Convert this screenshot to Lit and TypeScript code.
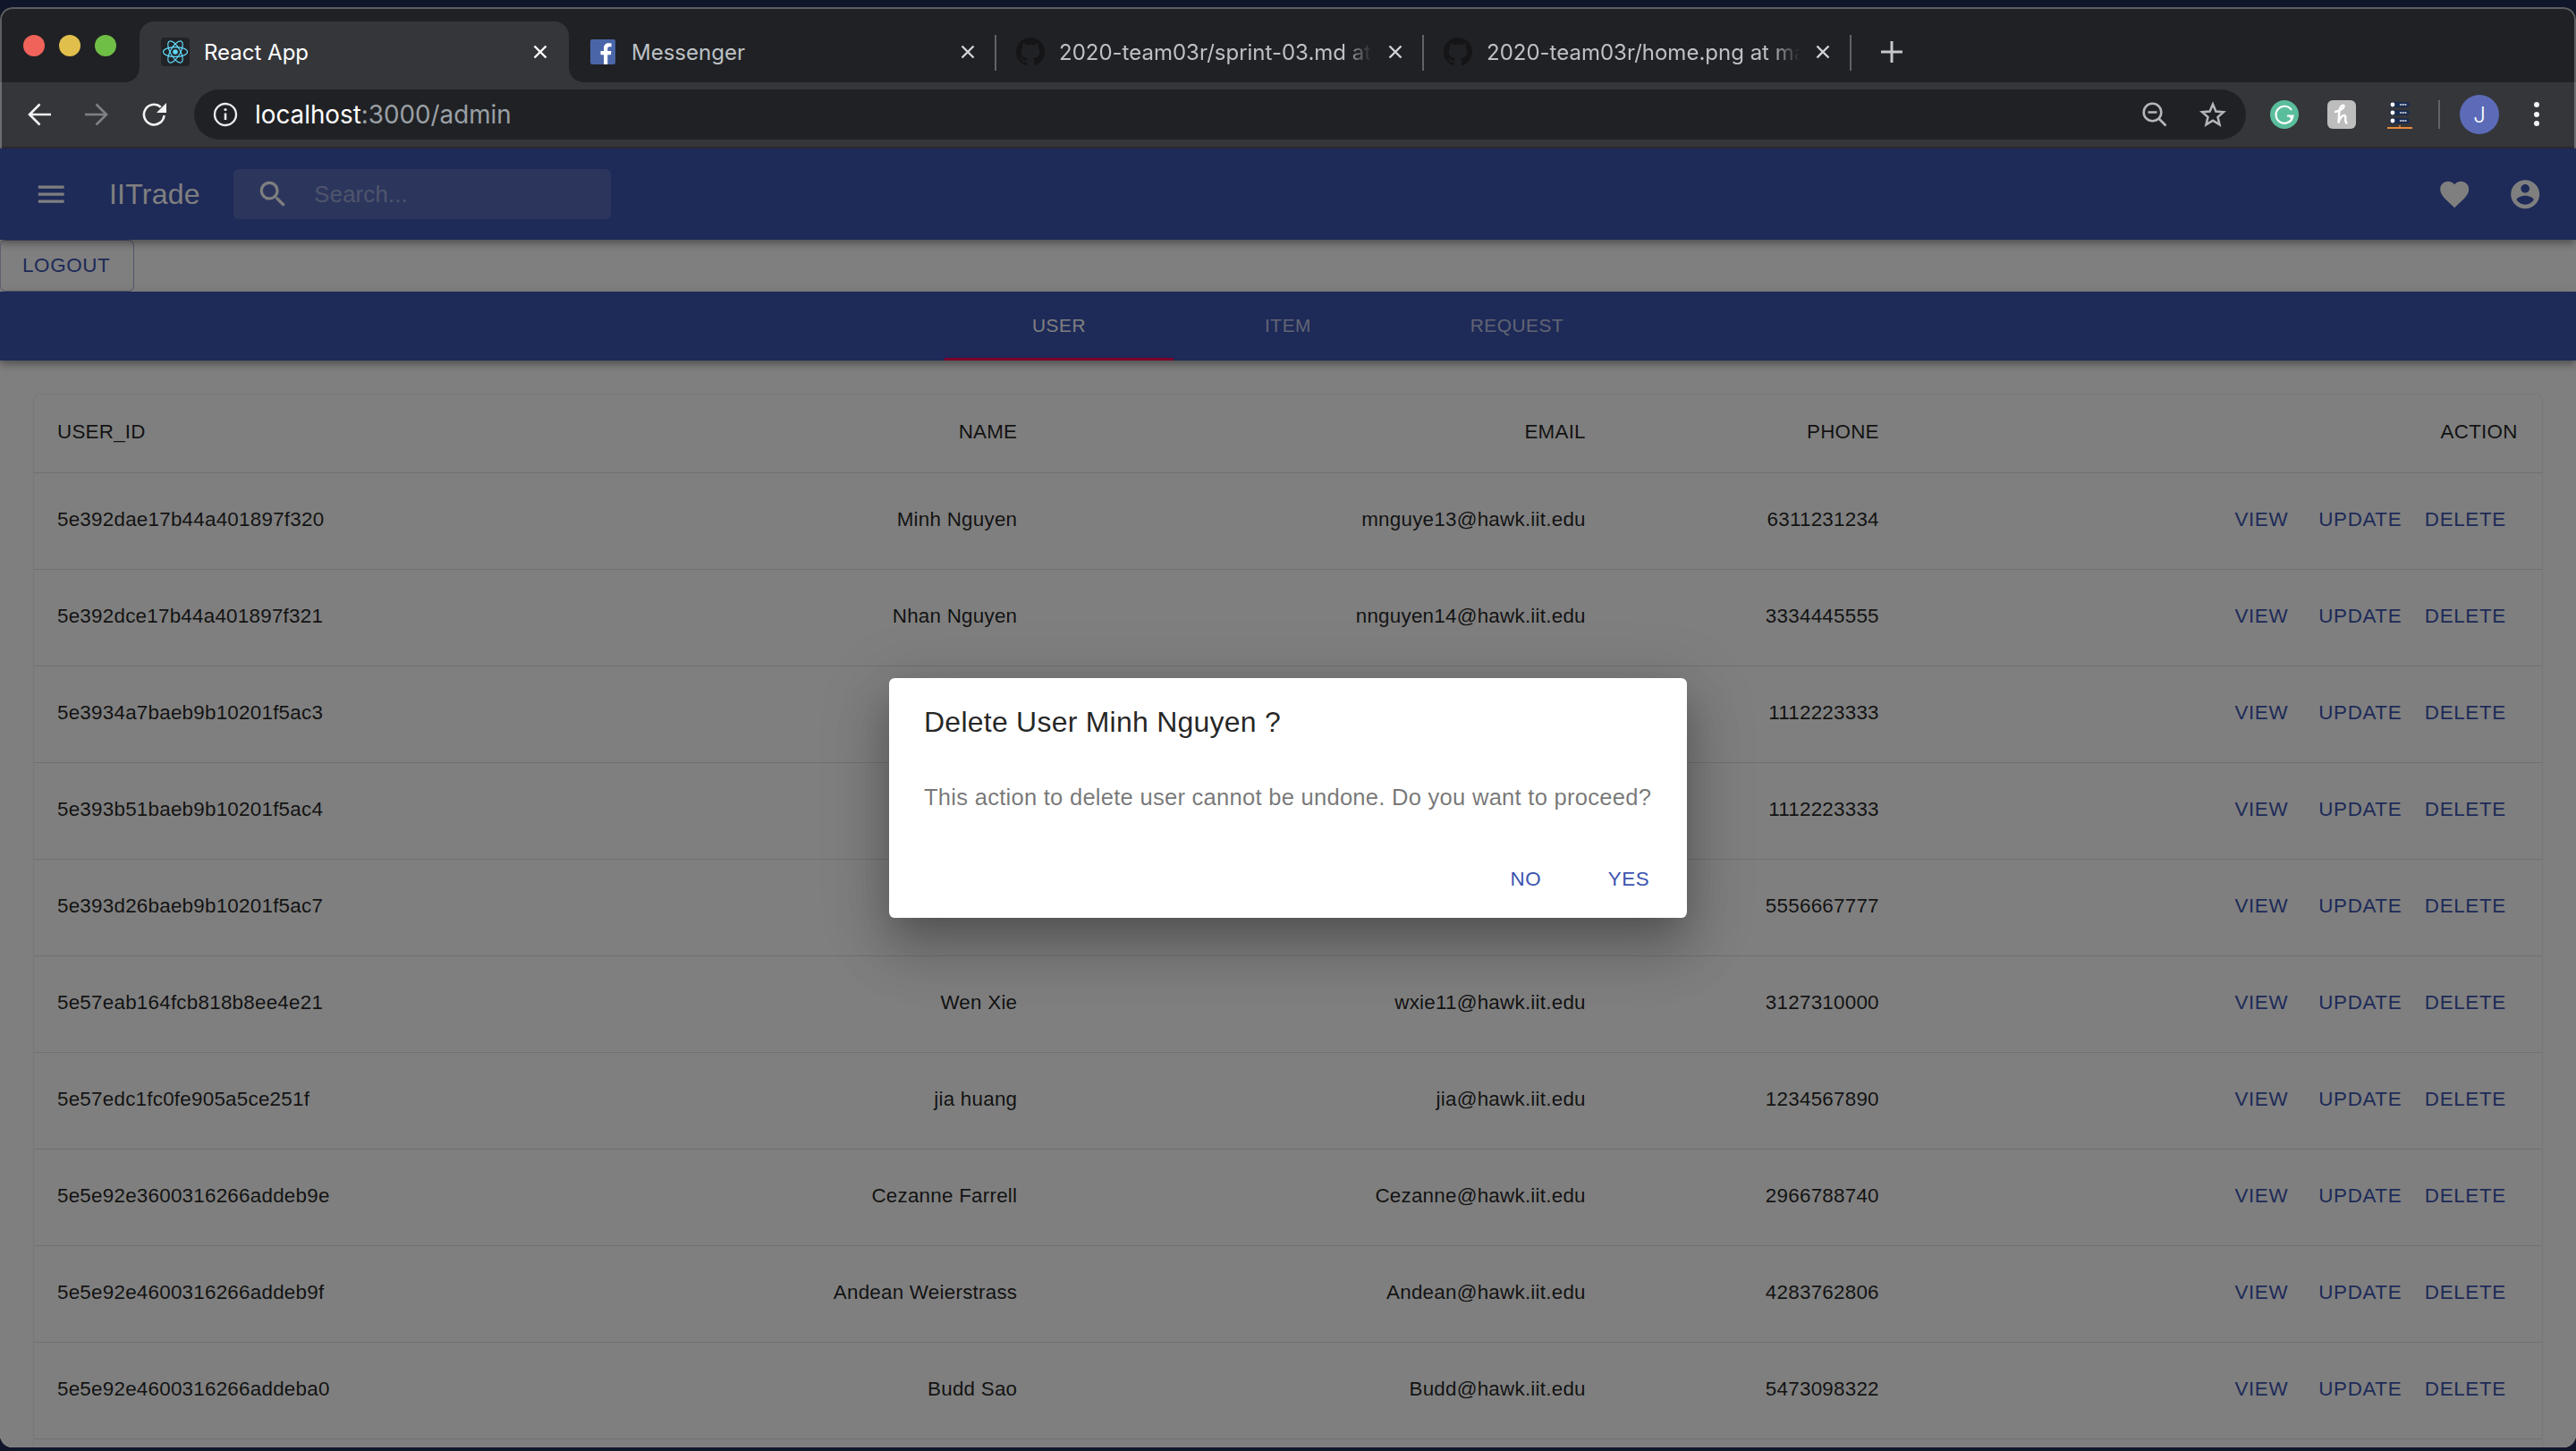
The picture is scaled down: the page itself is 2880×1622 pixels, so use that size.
import { LitElement, css, html, svg } from "lit";
import { customElement } from "lit/decorators.js";

const users = [
  ["5e392dae17b44a401897f320", "Minh Nguyen", "mnguye13@hawk.iit.edu", "6311231234"],
  ["5e392dce17b44a401897f321", "Nhan Nguyen", "nnguyen14@hawk.iit.edu", "3334445555"],
  ["5e3934a7baeb9b10201f5ac3", "", "", "1112223333"],
  ["5e393b51baeb9b10201f5ac4", "", "", "1112223333"],
  ["5e393d26baeb9b10201f5ac7", "", "", "5556667777"],
  ["5e57eab164fcb818b8ee4e21", "Wen Xie", "wxie11@hawk.iit.edu", "3127310000"],
  ["5e57edc1fc0fe905a5ce251f", "jia huang", "jia@hawk.iit.edu", "1234567890"],
  ["5e5e92e3600316266addeb9e", "Cezanne Farrell", "Cezanne@hawk.iit.edu", "2966788740"],
  ["5e5e92e4600316266addeb9f", "Andean Weierstrass", "Andean@hawk.iit.edu", "4283762806"],
  ["5e5e92e4600316266addeba0", "Budd Sao", "Budd@hawk.iit.edu", "5473098322"],
  ["", "", "", ""],
];

const GITHUB =
  "M8 0C3.58 0 0 3.58 0 8c0 3.54 2.29 6.53 5.47 7.59.4.07.55-.17.55-.38 0-.19-.01-.82-.01-1.49-2.01.37-2.53-.49-2.69-.94-.09-.23-.48-.94-.82-1.13-.28-.15-.68-.52-.01-.53.63-.01 1.08.58 1.23.82.72 1.21 1.87.87 2.33.66.07-.52.28-.87.51-1.07-1.78-.2-3.64-.89-3.64-3.95 0-.87.31-1.59.82-2.15-.08-.2-.36-1.02.08-2.12 0 0 .67-.21 2.2.82.64-.18 1.32-.27 2-.27.68 0 1.36.09 2 .27 1.53-1.04 2.2-.82 2.2-.82.44 1.1.16 1.92.08 2.12.51.56.82 1.27.82 2.15 0 3.07-1.87 3.75-3.65 3.95.29.25.54.73.54 1.48 0 1.07-.01 1.93-.01 2.2 0 .21.15.46.55.38A8.013 8.013 0 0016 8c0-4.42-3.58-8-8-8z";

const reactIcon = html`<div class="fav react">
  <svg width="32" height="32" viewBox="0 0 32 32" fill="none" stroke="#61dafb" stroke-width="1.2">
    <circle cx="16" cy="16" r="2.8" fill="#61dafb" stroke="none"></circle>
    <ellipse cx="16" cy="16" rx="13.5" ry="5.4"></ellipse>
    <ellipse cx="16" cy="16" rx="13.5" ry="5.4" transform="rotate(60 16 16)"></ellipse>
    <ellipse cx="16" cy="16" rx="13.5" ry="5.4" transform="rotate(120 16 16)"></ellipse>
  </svg>
</div>`;

const fbIcon = html`<div class="fav">
  <svg width="28" height="28" viewBox="0 0 28 28">
    <rect width="28" height="28" rx="2" fill="#4a66a8"></rect>
    <path fill="#fff" d="M19.3 28V17.2h3.6l.5-4.2h-4.1v-2.700c0-1.200.3-2 2.100-2h2.200V4.500c-.4-.1-1.700-.2-3.200-.2-3.200 0-5.300 1.900-5.300 5.500V13h-3.600v4.200h3.600V28z"></path>
  </svg>
</div>`;

const ghIcon = html`<div class="fav">
  <svg width="32" height="32" viewBox="0 0 16 16"><path fill="#151517" d=${GITHUB}></path></svg>
</div>`;

const closeIcon = html`<svg class="close" width="20" height="20" viewBox="0 0 20 20" fill="none" stroke="currentColor" stroke-width="2.4">
  <path d="M3.500 3.500l13 13M16.500 3.500l-13 13"></path>
</svg>`;

const mui = (d: string) => svg`<path d=${d}></path>`;

@customElement("app-root")
export class AppRoot extends LitElement {
  static styles = css`
    :host {
      display: block;
      height: 1622px;
      overflow: hidden;
      background: #10172a;
      font-family: "Liberation Sans", Arial, sans-serif;
    }
    .window {
      position: relative;
      margin-top: 8px;
      height: 1610px;
      display: flex;
      flex-direction: column;
      border-radius: 14px;
      overflow: hidden;
      background: #202124;
    }
    .window::after {
      content: "";
      position: absolute;
      inset: 0;
      border-radius: 14px;
      border: 2px solid rgba(255, 255, 255, 0.28);
      pointer-events: none;
    }

    /* browser chrome */
    .strip {
      height: 84px;
      flex: none;
      display: flex;
      padding-top: 16px;
      box-sizing: border-box;
      background: #202124;
      position: relative;
    }
    .lights {
      width: 156px;
      height: 54px;
      flex: none;
      display: flex;
      align-items: center;
      gap: 16px;
      padding: 0 0 0 26px;
      box-sizing: border-box;
    }
    .lights i {
      width: 24px;
      height: 24px;
      border-radius: 50%;
    }
    .tab {
      width: 478px;
      height: 68px;
      flex: none;
      display: flex;
      align-items: center;
      gap: 16px;
      padding: 0 22px;
      box-sizing: border-box;
      color: #bdc1c6;
      font: 24px "Inter", sans-serif;
      position: relative;
    }
    .tab.active {
      width: 480px;
      padding-left: 24px;
      background: #35363a;
      color: #fff;
      border-radius: 16px 16px 0 0;
    }
    .tab.active::before,
    .tab.active::after {
      content: "";
      position: absolute;
      bottom: 0;
      width: 16px;
      height: 16px;
    }
    .tab.active::before {
      left: -16px;
      background: radial-gradient(circle at 0 0, transparent 15.500px, #35363a 16px);
    }
    .tab.active::after {
      right: -16px;
      background: radial-gradient(circle at 100% 0, transparent 15.500px, #35363a 16px);
    }
    .tab.sep::after {
      content: "";
      position: absolute;
      right: 0;
      top: 15px;
      height: 40px;
      width: 2px;
      background: #5f6368;
    }
    .fav {
      width: 32px;
      height: 32px;
      flex: none;
      display: flex;
      align-items: center;
      justify-content: center;
    }
    .fav.react {
      background: #222326;
      border-radius: 4px;
    }
    .title {
      flex: 1;
      min-width: 0;
      white-space: nowrap;
      overflow: hidden;
      -webkit-mask-image: linear-gradient(to right, #000 calc(100% - 32px), transparent);
      mask-image: linear-gradient(to right, #000 calc(100% - 32px), transparent);
    }
    .tab.active .title,
    .tab.plain .title {
      -webkit-mask-image: none;
      mask-image: none;
    }
    .close {
      flex: none;
      color: #d0d2d6;
    }
    .tab.active .close {
      color: #fff;
    }
    .plus {
      margin: 21px 0 0 32px;
      flex: none;
    }

    .toolbar {
      height: 72px;
      flex: none;
      display: flex;
      align-items: center;
      padding-left: 31px;
      background: #35363a;
      border-bottom: 2px solid #28292c;
      box-sizing: content-box;
    }
    .toolbar > svg {
      flex: none;
    }
    .omni {
      width: 2294px;
      height: 56px;
      margin-left: 30px;
      flex: none;
      display: flex;
      align-items: center;
      padding: 0 22px 0 21px;
      box-sizing: border-box;
      border-radius: 28px;
      background: #202124;
    }
    .url {
      flex: 1;
      margin-left: 19px;
      font: 27.800px "Inter", sans-serif;
      color: #9aa0a6;
    }
    .url b {
      font-weight: 400;
      color: #fff;
    }
    .star {
      margin-left: 36px;
    }
    .ext-gram {
      margin-left: 27px;
    }
    .ext-honey {
      margin-left: 32px;
    }
    .ext-list {
      margin-left: 35px;
    }
    .divider {
      width: 2px;
      height: 32px;
      margin-left: 29px;
      flex: none;
      background: #5f6368;
    }
    .avatar {
      width: 44px;
      height: 44px;
      margin-left: 22px;
      flex: none;
      display: flex;
      align-items: center;
      justify-content: center;
      border-radius: 50%;
      background: #5c6bb8;
      color: #fff;
      font: 300 24px "Inter", sans-serif;
    }
    .dots {
      margin-left: 39px;
    }

    /* the app */
    .viewport {
      position: relative;
      flex: 1;
      min-height: 0;
      overflow: hidden;
      background: #fff;
    }
    .appbar {
      height: 102.400px;
      display: flex;
      align-items: center;
      background: #3c54b0;
      color: #fff;
      position: relative;
      z-index: 2;
      box-shadow: 0 3.200px 6.400px -1.600px rgba(0, 0, 0, 0.2), 0 6.400px 8px 0 rgba(0, 0, 0, 0.14),
        0 1.600px 16px 0 rgba(0, 0, 0, 0.12);
    }
    .appbar svg {
      fill: #fff;
      flex: none;
    }
    .menu {
      margin-left: 38px;
    }
    .logo {
      margin-left: 45.600px;
      font-size: 32px;
      letter-spacing: 0.240px;
    }
    .search {
      width: 422px;
      height: 56px;
      margin-left: 37.500px;
      display: flex;
      align-items: center;
      padding-left: 25px;
      box-sizing: border-box;
      border-radius: 6.400px;
      background: rgba(255, 255, 255, 0.15);
    }
    .placeholder {
      margin-left: 26.600px;
      font-size: 25.600px;
      color: rgba(255, 255, 255, 0.42);
      letter-spacing: 0.240px;
    }
    .grow {
      flex: 1;
    }
    .gap {
      margin-left: 40px;
    }
    .acct {
      margin-right: 38px;
    }

    .logout-row {
      height: 57.600px;
    }
    .logout {
      width: 150px;
      height: 57.600px;
      padding-left: 24px;
      box-sizing: border-box;
      display: flex;
      align-items: center;
      font-size: 22.400px;
      letter-spacing: 0.640px;
      color: #3c54b0;
      border: 1.600px solid rgba(63, 81, 181, 0.5);
      border-radius: 6.400px;
    }

    .tabs {
      height: 76.800px;
      display: flex;
      justify-content: center;
      background: #3c54b0;
      position: relative;
      z-index: 1;
      box-shadow: 0 3.200px 6.400px -1.600px rgba(0, 0, 0, 0.2), 0 6.400px 8px 0 rgba(0, 0, 0, 0.14),
        0 1.600px 16px 0 rgba(0, 0, 0, 0.12);
    }
    .tabs div {
      width: 256px;
      box-sizing: border-box;
      display: flex;
      align-items: center;
      justify-content: center;
      padding-top: 3.200px;
      font-size: 20.800px;
      letter-spacing: 0.594px;
      color: rgba(255, 255, 255, 0.7);
      border-bottom: 3.200px solid transparent;
    }
    .tabs div.on {
      color: #fff;
      border-bottom-color: #f50057;
    }

    .card {
      margin: 38px 38.400px 0;
      background: #fff;
      border-radius: 6.400px;
      box-shadow: 0 1.600px 1.600px rgba(0, 0, 0, 0.14), 0 0 1.600px rgba(0, 0, 0, 0.2);
    }
    .row {
      display: grid;
      grid-template-columns: 562px 562.500px 635.500px 328px 1fr;
      height: 108px;
      padding-bottom: 1.600px;
      box-sizing: border-box;
      align-items: center;
      font-size: 22.400px;
      letter-spacing: 0.240px;
      color: rgba(0, 0, 0, 0.87);
      border-bottom: 1.600px solid #e0e0e0;
    }
    .row.head {
      height: 88px;
    }
    .row > div {
      padding: 0 25.600px;
      text-align: right;
      white-space: nowrap;
    }
    .row > div:first-child {
      text-align: left;
    }
    .row > div:last-child {
      padding-right: 27px;
    }
    .actions {
      display: flex;
      justify-content: flex-end;
    }
    .actions span {
      min-width: 102.400px;
      padding: 0 12.800px;
      box-sizing: border-box;
      text-align: center;
      color: #3c54b0;
      letter-spacing: 0.640px;
    }

    .scrim {
      position: absolute;
      inset: 0;
      z-index: 5;
      background: rgba(0, 0, 0, 0.5);
    }
    .dialog {
      position: absolute;
      z-index: 6;
      left: 994px;
      top: 592px;
      width: 892px;
      height: 268px;
      box-sizing: border-box;
      padding: 25.600px 0 0;
      display: flex;
      flex-direction: column;
      background: #fff;
      border-radius: 6.400px;
      box-shadow: 0 17.600px 35.200px -11.200px rgba(0, 0, 0, 0.2), 0 38.400px 60.800px 4.800px rgba(0, 0, 0, 0.14),
        0 14.400px 73.600px 12.800px rgba(0, 0, 0, 0.12);
    }
    .dialog h2 {
      margin: 0;
      padding: 0 39px;
      font-size: 32px;
      line-height: 47px;
      font-weight: 400;
      letter-spacing: 0.240px;
      color: rgba(0, 0, 0, 0.87);
    }
    .dialog p {
      margin: 41px 0 0;
      padding: 0 39px;
      font-size: 25.600px;
      line-height: 38px;
      letter-spacing: 0.240px;
      color: rgba(0, 0, 0, 0.54);
      white-space: nowrap;
    }
    .dialog footer {
      margin-top: auto;
      padding: 0 13.800px 14px;
      display: flex;
      justify-content: flex-end;
      gap: 12.800px;
    }
    .dialog footer span {
      width: 102.400px;
      height: 58px;
      display: flex;
      align-items: center;
      justify-content: center;
      font-size: 22.400px;
      letter-spacing: 0.640px;
      color: #3c54b0;
    }
  `;

  render() {
    return html`
      <div class="window">
        <div class="strip">
          <div class="lights">
            <i style="background:#f0635a"></i>
            <i style="background:#e1bf4c"></i>
            <i style="background:#6fbe46"></i>
          </div>
          <div class="tab active">${reactIcon}<span class="title">React App</span>${closeIcon}</div>
          <div class="tab plain sep">${fbIcon}<span class="title">Messenger</span>${closeIcon}</div>
          <div class="tab sep">${ghIcon}<span class="title">2020-team03r/sprint-03.md at master</span>${closeIcon}</div>
          <div class="tab sep">${ghIcon}<span class="title">2020-team03r/home.png at master</span>${closeIcon}</div>
          <svg class="plus" width="26" height="26" viewBox="0 0 26 26" fill="none" stroke="#c4c7cc" stroke-width="3">
            <path d="M13 1v24M1 13h24"></path>
          </svg>
        </div>

        <div class="toolbar">
          <svg width="26" height="26" viewBox="0 0 26 26" fill="none" stroke="#f1f3f4" stroke-width="2.600">
            <path d="M26 13H2.500M13.500 1.500L2 13l11.500 11.500"></path>
          </svg>
          <svg style="margin-left:38px" width="26" height="26" viewBox="0 0 26 26" fill="none" stroke="#7f8184" stroke-width="2.600">
            <path d="M0 13h23.500M12.500 1.500L24 13 12.500 24.500"></path>
          </svg>
          <svg style="margin-left:38px" width="28" height="28" viewBox="0 0 28 28" fill="none">
            <path stroke="#f1f3f4" stroke-width="2.600" d="M24.500 15a11.300 11.300 0 1 1-3.700-9.300"></path>
            <path fill="#f1f3f4" d="M27 1v11H16z"></path>
          </svg>

          <div class="omni">
            <svg width="28" height="28" viewBox="0 0 28 28" fill="none" stroke="#e8eaed" stroke-width="2.400">
              <circle cx="14" cy="14" r="12"></circle>
              <path stroke-width="2.600" d="M14 12.500V20"></path>
              <circle cx="14" cy="8.500" r="1.600" fill="#e8eaed" stroke="none"></circle>
            </svg>
            <div class="url"><b>localhost</b>:3000/admin</div>
            <svg width="28" height="28" viewBox="0 0 28 28" fill="none" stroke="#b5b7bb" stroke-width="2.600">
              <circle cx="11.500" cy="11.500" r="9.800"></circle>
              <path d="M6.500 11.500h10M18.500 18.500l8 8"></path>
            </svg>
            <svg class="star" width="30" height="30" viewBox="0 0 30 30" fill="none" stroke="#b5b7bb" stroke-width="2.500">
              <path d="M15 3.500l3.400 8 8.600.7-6.500 5.700 2 8.400L15 21.800l-7.500 4.500 2-8.400L3 12.200l8.600-.7z"></path>
            </svg>
          </div>

          <svg class="ext-gram" width="32" height="32" viewBox="0 0 32 32" fill="none">
            <circle cx="16" cy="16" r="16" fill="#5abd9c"></circle>
            <path stroke="#fff" stroke-width="2.200" d="M24 11a9.500 9.500 0 1 0 1.500 6.500H19"></path>
            <path fill="#fff" d="M25 23v-6h-5z"></path>
          </svg>
          <svg class="ext-honey" width="32" height="32" viewBox="0 0 32 32" fill="none">
            <rect width="32" height="32" rx="6" fill="#bdbdbd"></rect>
            <path stroke="#fff" stroke-width="2.400" stroke-linecap="round"
              d="M9 13c5-1 10-4 9.500-6.500-.5-2-3.500-.5-4.500 3-1 3.500-1 10-1.500 16 1-5 4-9 6.500-8.500 3 .6-.5 6 2.500 8.500"></path>
          </svg>
          <svg class="ext-list" width="28" height="34" viewBox="0 0 28 34" style="margin-top:2px">
            <rect x="3" y="2" width="22" height="6" rx="3" fill="#1a2c50"></rect>
            <rect x="3" y="11" width="22" height="6" rx="3" fill="#1a2c50"></rect>
            <rect x="3" y="20" width="22" height="6" rx="3" fill="#1a2c50"></rect>
            <circle cx="6" cy="5" r="2.400" fill="#fff"></circle>
            <circle cx="6" cy="14" r="2.400" fill="#fff"></circle>
            <circle cx="6" cy="23" r="2.400" fill="#fff"></circle>
            <path stroke="#fff" stroke-width="1.600" stroke-dasharray="1.400 .6" d="M14 5h8M14 14h8M14 23h8"></path>
            <path stroke="#e68a3c" stroke-width="2" d="M0 31h28"></path>
            <path stroke="#e68a3c" stroke-width="1.500" d="M14 28v3"></path>
          </svg>
          <div class="divider"></div>
          <div class="avatar">J</div>
          <svg class="dots" width="6" height="28" viewBox="0 0 6 28" fill="#f1f3f4">
            <circle cx="3" cy="3" r="3"></circle>
            <circle cx="3" cy="14" r="3"></circle>
            <circle cx="3" cy="24" r="3"></circle>
          </svg>
        </div>

        <div class="viewport">
          <div class="appbar">
            <svg class="menu" width="38.400" height="38.400" viewBox="0 0 24 24">
              ${mui("M3 18h18v-2H3v2zm0-5h18v-2H3v2zm0-7v2h18V6H3z")}
            </svg>
            <div class="logo">IITrade</div>
            <div class="search">
              <svg width="38.400" height="38.400" viewBox="0 0 24 24">
                ${mui("M15.500 14h-.79l-.28-.27C15.410 12.590 16 11.110 16 9.500 16 5.910 13.090 3 9.500 3S3 5.910 3 9.500 5.910 16 9.500 16c1.610 0 3.090-.59 4.230-1.570l.27.28v.79l5 4.990L20.490 19l-4.990-5zm-6 0C7.010 14 5 11.990 5 9.500S7.010 5 9.500 5 14 7.010 14 9.500 11.990 14 9.500 14z")}
              </svg>
              <span class="placeholder">Search...</span>
            </div>
            <div class="grow"></div>
            <svg width="38.400" height="38.400" viewBox="0 0 24 24">
              ${mui("M12 21.350l-1.450-1.320C5.400 15.360 2 12.280 2 8.500 2 5.420 4.420 3 7.500 3c1.740 0 3.410.81 4.500 2.090C13.090 3.810 14.760 3 16.500 3 19.580 3 22 5.420 22 8.500c0 3.780-3.400 6.860-8.550 11.540L12 21.350z")}
            </svg>
            <svg class="gap acct" width="38.400" height="38.400" viewBox="0 0 24 24">
              ${mui("M12 2C6.480 2 2 6.480 2 12s4.480 10 10 10 10-4.480 10-10S17.520 2 12 2zm0 3c1.660 0 3 1.340 3 3s-1.340 3-3 3-3-1.340-3-3 1.340-3 3-3zm0 14.200c-2.500 0-4.710-1.280-6-3.220.03-1.990 4-3.080 6-3.080 1.990 0 5.970 1.090 6 3.080-1.290 1.940-3.500 3.220-6 3.220z")}
            </svg>
          </div>

          <div class="logout-row"><div class="logout">LOGOUT</div></div>

          <div class="tabs">
            <div class="on">USER</div>
            <div>ITEM</div>
            <div>REQUEST</div>
          </div>

          <div class="card">
            <div class="row head">
              <div>USER_ID</div>
              <div>NAME</div>
              <div>EMAIL</div>
              <div>PHONE</div>
              <div>ACTION</div>
            </div>
            ${users.map(
              (u) => html`<div class="row">
                <div>${u[0]}</div>
                <div>${u[1]}</div>
                <div>${u[2]}</div>
                <div>${u[3]}</div>
                <div class="actions">
                  ${u[0] ? html`<span>VIEW</span><span>UPDATE</span><span>DELETE</span>` : ""}
                </div>
              </div>`
            )}
          </div>

          <div class="scrim"></div>
          <div class="dialog">
            <h2>Delete User Minh Nguyen ?</h2>
            <p>This action to delete user cannot be undone. Do you want to proceed?</p>
            <footer><span>NO</span><span>YES</span></footer>
          </div>
        </div>
      </div>
    `;
  }
}
